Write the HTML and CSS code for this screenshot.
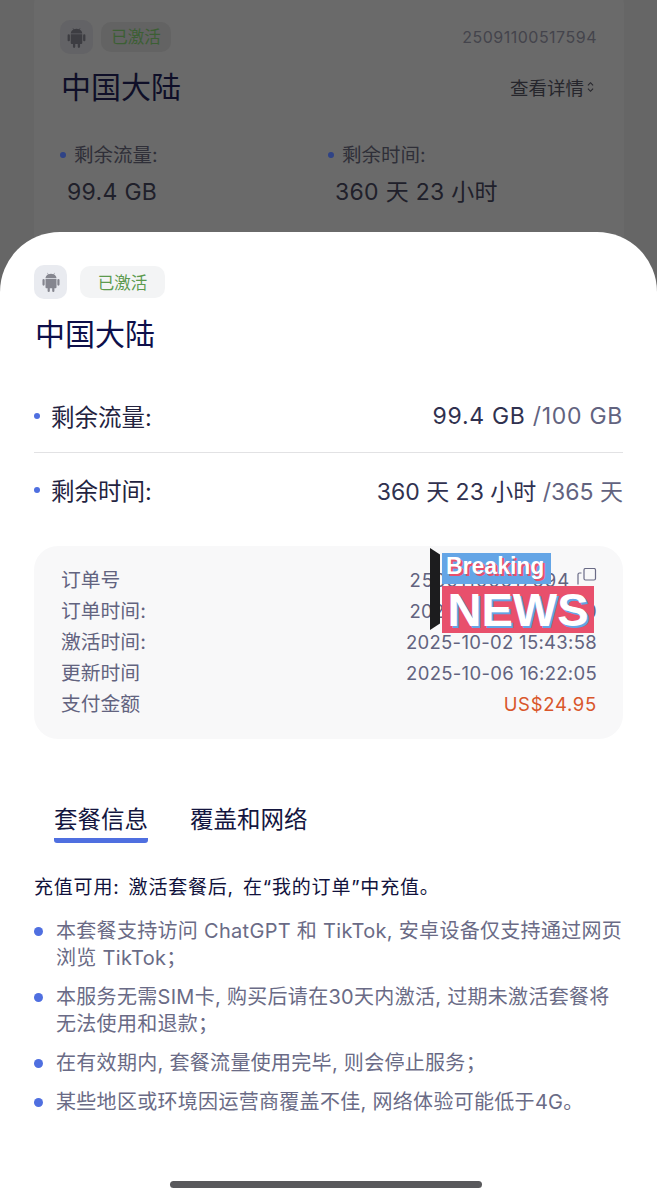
FILE: index.html
```html
<!DOCTYPE html>
<html>
<head>
  <title>订单详情</title>
  <link rel="stylesheet" href="styles.css">
</head>
<body>
  <div class="page">
    <div class="order-card">
      <div class="order-top">
        <div class="tags">
          <span class="os-icon os-icon-back">
            <svg viewBox="0 0 24 24" width="23" height="23"><path class="droid" d="M6 8.600h12v9.100a1 1 0 0 1-1 1h-1.300v3a1.200 1.200 0 0 1-2.400 0v-3h-2.600v3a1.200 1.200 0 0 1-2.400 0v-3H7a1 1 0 0 1-1-1zM3.900 8.600A1.200 1.200 0 0 1 5.100 9.800v5a1.200 1.200 0 0 1-2.400 0v-5a1.200 1.200 0 0 1 1.200-1.200zM20.100 8.600a1.200 1.200 0 0 1 1.200 1.200v5a1.200 1.200 0 0 1-2.400 0v-5a1.200 1.200 0 0 1 1.200-1.200zM6 7.900C6.100 5.800 7.300 4.400 8.700 3.700L7.900 2.300l.4-.3.9 1.500a7 7 0 0 1 5.600 0l.9-1.500.4.3-.8 1.400c1.400.7 2.600 2.100 2.700 4.200z"/></svg>
          </span>
          <span class="status status-back">已激活</span>
        </div>
        <span class="order-no">25091100517594</span>
      </div>
      <div class="order-mid">
        <h2 class="order-title">中国大陆</h2>
        <span class="order-more">查看详情
          <svg viewBox="0 0 8 14" width="7" height="12"><path d="M1 5l3-3 3 3M1 9l3 3 3-3" fill="none" stroke="#26262c" stroke-width="1.300"/></svg>
        </span>
      </div>
      <div class="order-stats">
        <div class="order-stat">
          <div class="order-label"><i class="dot-small"></i>剩余流量:</div>
          <div class="order-value">99.4 GB</div>
        </div>
        <div class="order-stat">
          <div class="order-label"><i class="dot-small"></i>剩余时间:</div>
          <div class="order-value">360 天 23 小时</div>
        </div>
      </div>
    </div>

    <div class="sheet">
      <div class="tags tags-sheet">
        <span class="os-icon">
          <svg viewBox="0 0 24 24" width="22" height="22"><path class="droid" d="M6 8.600h12v9.100a1 1 0 0 1-1 1h-1.300v3a1.200 1.200 0 0 1-2.400 0v-3h-2.600v3a1.200 1.200 0 0 1-2.400 0v-3H7a1 1 0 0 1-1-1zM3.900 8.600A1.200 1.200 0 0 1 5.100 9.800v5a1.200 1.200 0 0 1-2.400 0v-5a1.200 1.200 0 0 1 1.200-1.200zM20.100 8.600a1.200 1.200 0 0 1 1.200 1.200v5a1.200 1.200 0 0 1-2.400 0v-5a1.200 1.200 0 0 1 1.200-1.200zM6 7.900C6.100 5.800 7.300 4.400 8.700 3.700L7.900 2.300l.4-.3.9 1.500a7 7 0 0 1 5.600 0l.9-1.500.4.3-.8 1.400c1.400.7 2.600 2.100 2.700 4.200z"/></svg>
        </span>
        <span class="status">已激活</span>
      </div>
      <h2 class="sheet-title">中国大陆</h2>

      <div class="usage-row usage-row-line">
        <div class="usage-label"><i class="dot-small"></i>剩余流量:</div>
        <div class="usage-value usage-value-wide">99.4 GB <span class="usage-total">/100 GB</span></div>
      </div>
      <div class="usage-row">
        <div class="usage-label"><i class="dot-small"></i>剩余时间:</div>
        <div class="usage-value">360 天 23 小时 <span class="usage-total">/365 天</span></div>
      </div>

      <div class="info-box">
        <div class="info-row">
          <span>订单号</span>
          <span class="info-value info-copy">25091100517594
            <svg viewBox="0 0 20 18" width="20" height="18"><path d="M7 2a1.500 1.500 0 0 1 1.500-1.500h8.500a1.500 1.500 0 0 1 1.500 1.500v8.500a1.500 1.500 0 0 1-1.500 1.500h-8.500a1.500 1.500 0 0 1-1.500-1.500zM4.500 5h-2a1.500 1.500 0 0 0-1.500 1.500v10" fill="none" stroke="#6a6b86" stroke-width="1.200"/></svg>
          </span>
        </div>
        <div class="info-row"><span>订单时间:</span><span class="info-value">2025-09-11 00:51:30</span></div>
        <div class="info-row"><span>激活时间:</span><span class="info-value">2025-10-02 15:43:58</span></div>
        <div class="info-row"><span>更新时间</span><span class="info-value">2025-10-06 16:22:05</span></div>
        <div class="info-row"><span>支付金额</span><span class="info-value price">US$24.95</span></div>
      </div>

      <div class="tabs">
        <span class="tab tab-active">套餐信息</span>
        <span class="tab">覆盖和网络</span>
      </div>

      <p class="recharge">充值可用: 激活套餐后, 在“我的订单”中充值。</p>

      <ul class="notes">
        <li>本套餐支持访问 ChatGPT 和 TikTok, 安卓设备仅支持通过网页浏览 TikTok；</li>
        <li>本服务无需SIM卡, 购买后请在30天内激活, 过期未激活套餐将无法使用和退款；</li>
        <li>在有效期内, 套餐流量使用完毕, 则会停止服务；</li>
        <li>某些地区或环境因运营商覆盖不佳, 网络体验可能低于4G。</li>
      </ul>
    </div>

    <div class="sticker">
      <div class="sticker-pole"></div>
      <div class="sticker-breaking">Breaking</div>
      <div class="sticker-news">NEWS</div>
    </div>

    <div class="home-bar"></div>
  </div>
</body>
</html>
```

FILE: styles.css
```css
* {
  box-sizing: border-box;
}

body {
  margin: 0;
  font-family: Inter, "Noto Sans CJK SC", sans-serif;
}

.page {
  position: relative;
  width: 657px;
  height: 1200px;
  overflow: hidden;
  background-color: #666;
}

/* order card behind the sheet */
.order-card {
  width: 590px;
  height: 300px;
  margin: -20px 0 0 34px;
  padding: 40px 27px 0 26px;
  background-color: #6a6a6a;
  border-radius: 24px;
}

.order-top,
.order-mid,
.tags {
  display: flex;
  align-items: center;
}

.order-top,
.order-mid {
  justify-content: space-between;
}

.tags {
  gap: 8px;
}

.os-icon {
  display: flex;
  align-items: center;
  justify-content: center;
  width: 33px;
  height: 34px;
  background-color: #e9ebf0;
  border-radius: 10px;
}

.os-icon-back {
  background-color: #636366;
}

.droid {
  fill: #85868f;
}

.os-icon-back .droid {
  fill: #3d3d42;
}

.status {
  width: 85px;
  height: 32px;
  margin-left: 5px;
  background-color: #f3f4f5;
  border-radius: 10px;
  color: #5c9a4e;
  font-size: 16.500px;
  line-height: 34px;
  text-align: center;
}

.status-back {
  width: 70px;
  height: 30px;
  margin-left: 0;
  background-color: #636363;
  border-radius: 10px;
  color: #3c5f34;
  line-height: 30px;
}

.order-no {
  color: #44444c;
  font-size: 16px;
  letter-spacing: 0.500px;
}

.order-mid {
  margin-top: 12px;
}

.order-title {
  margin: 0 0 0 1px;
  color: #0f0f28;
  font-size: 30px;
  font-weight: 400;
  line-height: 42px;
}

.order-more {
  display: flex;
  align-items: center;
  gap: 3px;
  margin-right: 3px;
  color: #26262c;
  font-size: 18.500px;
}

.order-stats {
  display: flex;
  margin-top: 34px;
}

.order-stat {
  width: 268px;
}

.order-label {
  display: flex;
  align-items: center;
  color: #2f2f38;
  font-size: 19.500px;
  line-height: 26px;
}

.order-value {
  margin: 9px 0 0 7px;
  color: #20202a;
  font-size: 23px;
  letter-spacing: 0.300px;
  line-height: 30px;
}

.dot-small {
  width: 6px;
  height: 6px;
  margin-right: 8px;
  background-color: #2f4386;
  border-radius: 50%;
}

/* bottom sheet */
.sheet {
  position: absolute;
  top: 232px;
  left: 0;
  width: 657px;
  height: 968px;
  padding: 33px 34px 0;
  background-color: #fff;
  border-radius: 60px 60px 0 0;
}

.sheet-title {
  margin: 14px 0 0 1px;
  color: #0d0f4a;
  font-size: 30px;
  font-weight: 400;
  line-height: 42px;
}

.usage-row {
  display: flex;
  align-items: center;
  justify-content: space-between;
  height: 74px;
}

.usage-row-line {
  margin-top: 24px;
  border-bottom: 1px solid #e2e2e4;
}

.usage-label {
  display: flex;
  align-items: center;
  color: #23233f;
  font-size: 23.500px;
}

.usage-label .dot-small {
  margin-right: 11px;
  background-color: #4f6fe0;
}

.usage-value {
  color: #30314f;
  font-size: 23px;
}

.usage-value-wide {
  letter-spacing: 0.700px;
}

.usage-total {
  color: #62637f;
}

.info-box {
  display: flex;
  flex-direction: column;
  height: 193px;
  margin-top: 19px;
  padding: 19px 26px 0 27px;
  background-color: #f8f8f9;
  border-radius: 24px;
}

.info-row {
  display: flex;
  justify-content: space-between;
  height: 31px;
  color: #62637f;
  font-size: 19.800px;
  line-height: 31px;
}

.info-value {
  font-size: 18.500px;
  letter-spacing: 0.300px;
}

.info-copy {
  position: relative;
  padding-right: 27px;
  letter-spacing: 0.900px;
}

.info-copy svg {
  position: absolute;
  top: 3px;
  right: 0;
}

.price {
  color: #d9562b;
  letter-spacing: 0.700px;
}

.tabs {
  display: flex;
  gap: 42px;
  margin: 61px 0 0 20px;
}

.tab {
  height: 43px;
  color: #14163f;
  font-size: 23.500px;
  line-height: 40px;
}

.tab-active {
  border-bottom: 5px solid #4f6fe0;
  border-radius: 0 0 3px 3px;
}

.recharge {
  margin: 31px 0 0;
  color: #11123c;
  font-size: 19px;
  letter-spacing: 0.800px;
  word-spacing: 3px;
  line-height: 28px;
}

.notes {
  margin: 16px 0 0;
  padding: 0;
  list-style: none;
}

.notes li {
  position: relative;
  margin-bottom: 12px;
  padding-left: 22px;
  color: #6a6b86;
  font-size: 20px;
  letter-spacing: 0.300px;
  line-height: 27px;
}

.notes li::before {
  content: "";
  position: absolute;
  top: 9px;
  left: 0;
  width: 9px;
  height: 9px;
  background-color: #4f6fe0;
  border-radius: 50%;
}

/* sticker laid over the info box */
.sticker {
  position: absolute;
  top: 548px;
  left: 430px;
  width: 170px;
  height: 90px;
  font-family: "Liberation Sans", Arial, sans-serif;
  font-weight: 700;
  color: #fff;
}

.sticker-pole {
  position: absolute;
  top: 0;
  left: 0;
  width: 10px;
  height: 82px;
  background-color: #1c1c1e;
  clip-path: polygon(0 0, 100% 8%, 100% 92%, 0 100%);
}

.sticker-breaking {
  position: absolute;
  top: 5px;
  left: 12px;
  width: 109px;
  height: 31px;
  padding-left: 4px;
  background-color: #64a5e6;
  font-size: 23px;
  line-height: 27px;
  text-shadow: 2px 2px 0 #e8506c;
}

.sticker-news {
  position: absolute;
  top: 38px;
  left: 12px;
  width: 152px;
  height: 47px;
  background-color: #e8506c;
  font-size: 47px;
  line-height: 47px;
  text-align: center;
  text-shadow: 2px 2px 0 #64a5e6;
}

.home-bar {
  position: absolute;
  bottom: 12px;
  left: 170px;
  width: 312px;
  height: 7px;
  background-color: #59595c;
  border-radius: 4px;
}
```
